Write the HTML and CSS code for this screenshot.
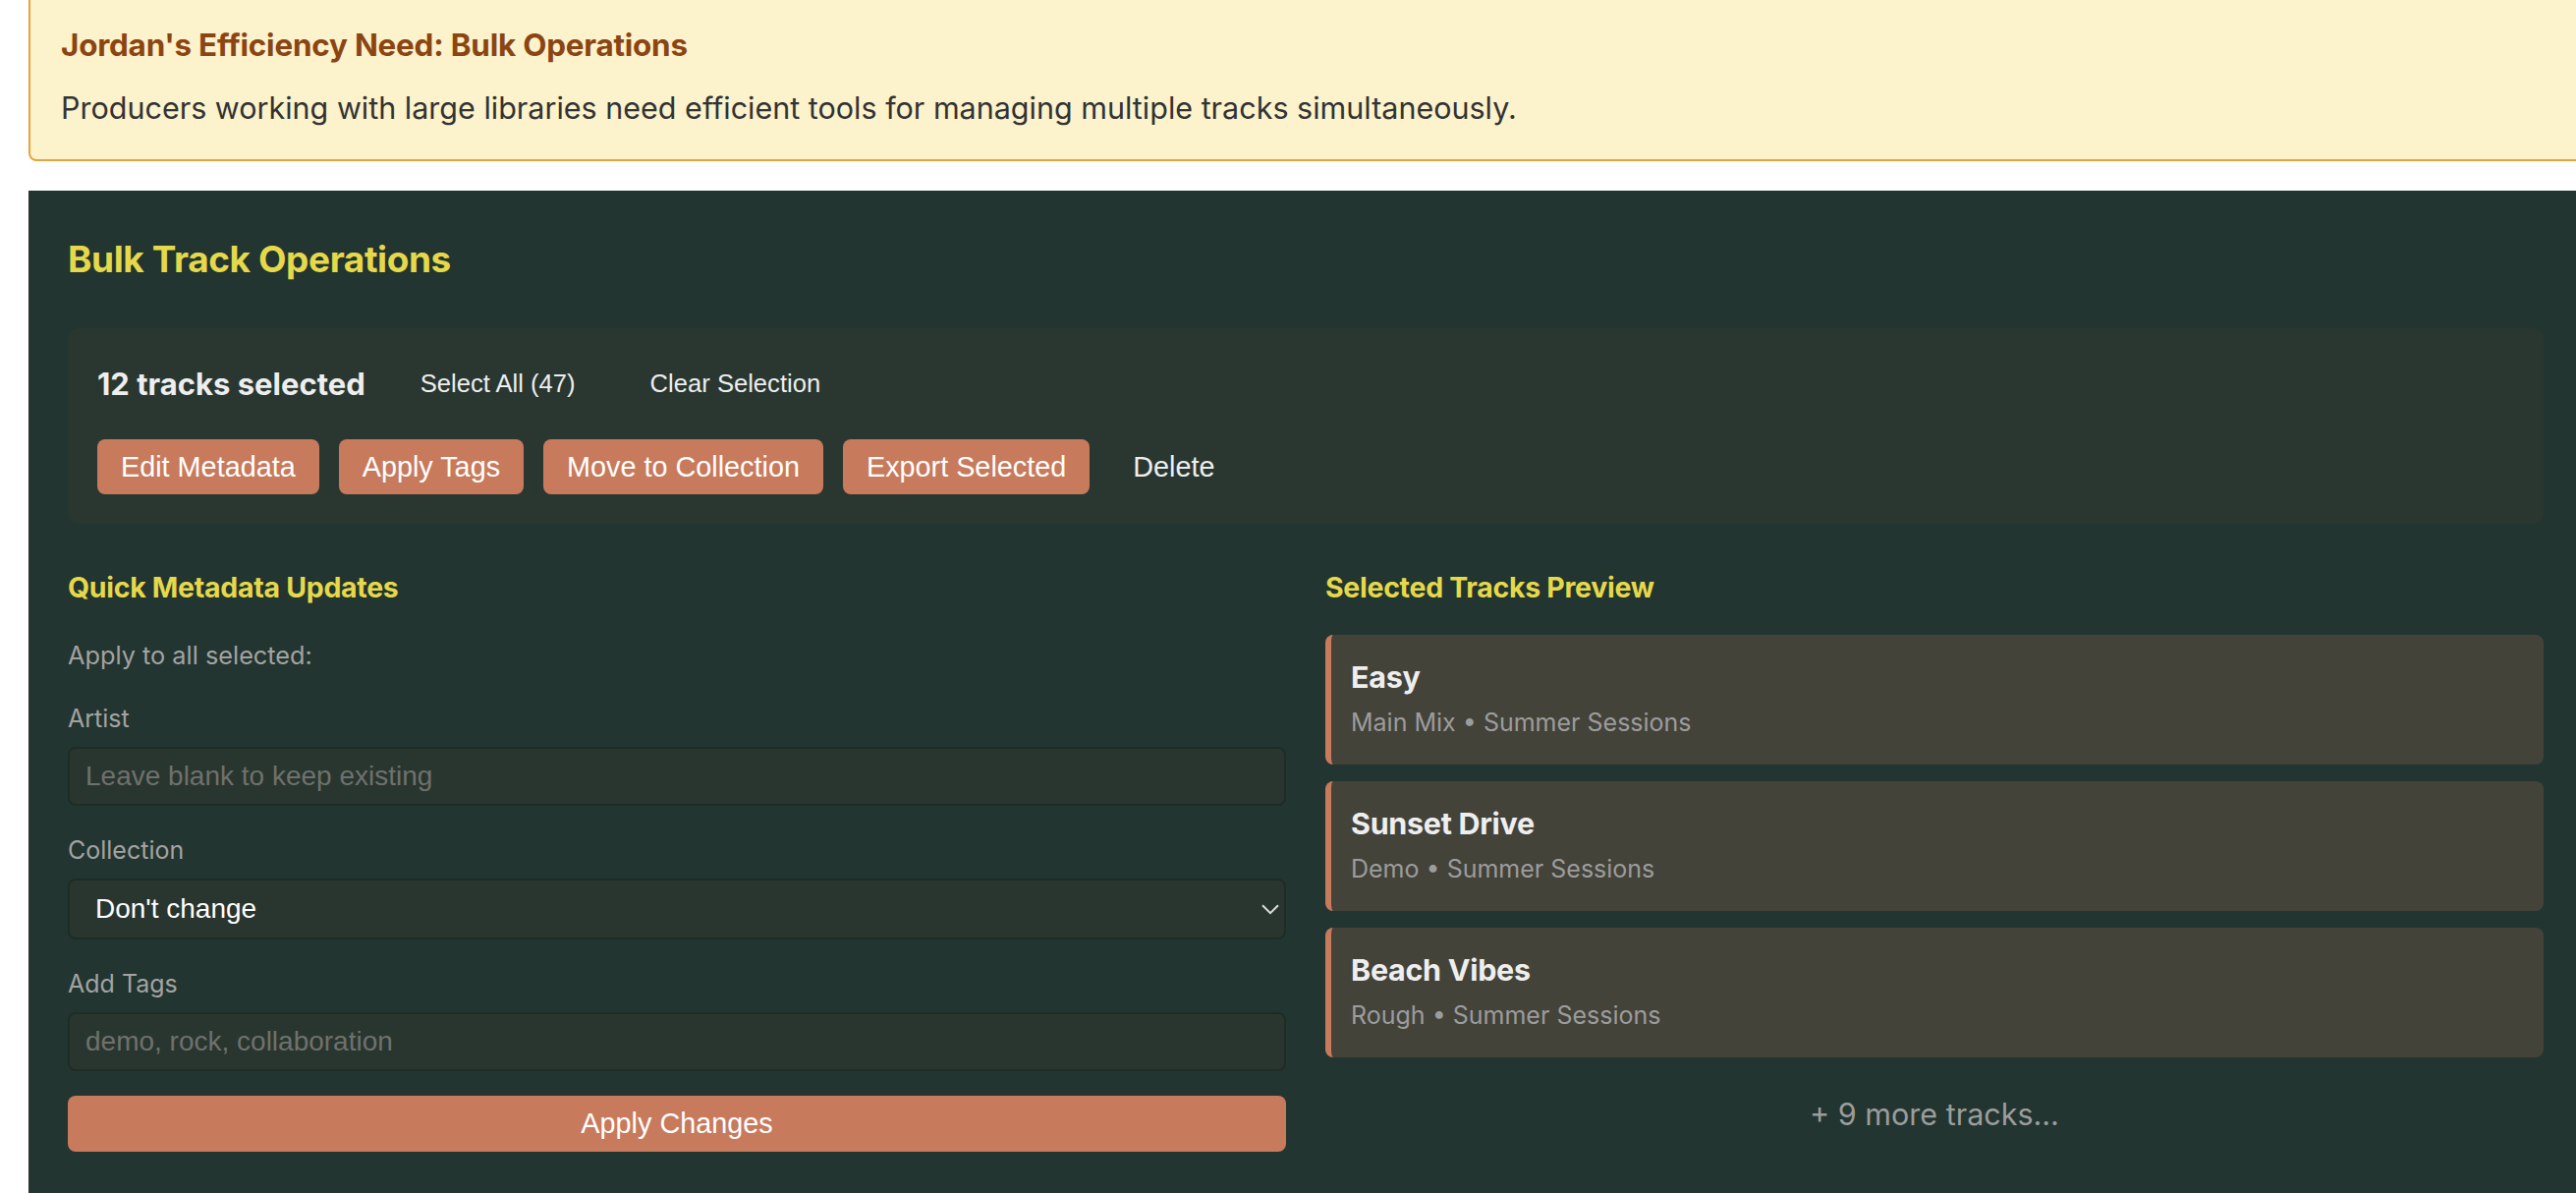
FILE: index.html
```html
<!DOCTYPE html>
<html lang="en">
<head>
<meta charset="utf-8">
<title>Bulk Track Operations</title>
<link rel="stylesheet" href="styles.css">
</head>
<body>
<div class="page">
  <div class="callout">
    <h4 class="callout-title">Jordan's Efficiency Need: Bulk Operations</h4>
    <p class="callout-text">Producers working with large libraries need efficient tools for managing multiple tracks simultaneously.</p>
  </div>

  <section class="bulk">
    <h3 class="bulk-title">Bulk Track Operations</h3>

    <div class="toolbar">
      <div class="sel-row">
        <span class="count">12 tracks selected</span>
        <button class="link-btn">Select All (47)</button>
        <button class="link-btn">Clear Selection</button>
      </div>
      <div class="actions">
        <button class="btn">Edit Metadata</button>
        <button class="btn">Apply Tags</button>
        <button class="btn">Move to Collection</button>
        <button class="btn">Export Selected</button>
        <button class="btn ghost">Delete</button>
      </div>
    </div>

    <div class="cols">
      <div class="col">
        <h4 class="col-title">Quick Metadata Updates</h4>
        <p class="hint">Apply to all selected:</p>
        <div class="field">
          <label class="label">Artist</label>
          <input class="input" type="text" placeholder="Leave blank to keep existing">
        </div>
        <div class="field">
          <label class="label">Collection</label>
          <div class="select-wrap">
            <select class="input select">
              <option>Don't change</option>
            </select>
            <svg class="chevron" width="18" height="11" viewBox="0 0 18 11"><path d="M1 1.2 L9 9.2 L17 1.2" fill="none" stroke="#dcdcdc" stroke-width="2"/></svg>
          </div>
        </div>
        <div class="field last">
          <label class="label">Add Tags</label>
          <input class="input" type="text" placeholder="demo, rock, collaboration">
        </div>
        <button class="btn wide">Apply Changes</button>
      </div>

      <div class="col">
        <h4 class="col-title">Selected Tracks Preview</h4>
        <div class="card">
          <div class="card-title">Easy</div>
          <div class="card-meta">Main Mix • Summer Sessions</div>
        </div>
        <div class="card">
          <div class="card-title">Sunset Drive</div>
          <div class="card-meta">Demo • Summer Sessions</div>
        </div>
        <div class="card">
          <div class="card-title">Beach Vibes</div>
          <div class="card-meta">Rough • Summer Sessions</div>
        </div>
        <div class="more">+ 9 more tracks...</div>
      </div>
    </div>
  </section>
</div>
</body>
</html>
```

FILE: styles.css
```css
html, body {
  margin: 0;
  padding: 0;
  overflow: hidden;
  background: #ffffff;
}

body {
  font-family: "Inter", "Liberation Sans", sans-serif;
}

.page {
  padding-left: 29px;
  width: 2600px;
}

/* Callout */
.callout {
  width: 2587px;
  background: #fcf2cb;
  border: 2px solid #e8a33b;
  border-top: none;
  border-radius: 0 0 8px 8px;
  padding: 27px 30px 35px 31px;
  box-sizing: content-box;
}

.callout-title {
  margin: 0;
  font-size: 31.4px;
  font-weight: 700;
  color: #8b4513;
  line-height: 38px;
  letter-spacing: -0.2px;
}

.callout-text {
  margin: 27px 0 0;
  font-size: 30.5px;
  line-height: 35px;
  color: #333333;
}

/* Bulk panel */
.bulk {
  margin-top: 30px;
  background: #223530;
  padding: 47px 40px 40px 40px;
  width: 2520px;
}

.bulk-title {
  margin: 0 0 47px;
  font-size: 37px;
  line-height: 46px;
  font-weight: 700;
  color: #e5d84b;
  letter-spacing: -0.4px;
}

.toolbar {
  background: #293730;
  border-radius: 10px;
  padding: 30px;
  display: flex;
  flex-direction: column;
  gap: 30px;
}

.sel-row {
  display: flex;
  align-items: center;
  gap: 36px;
}

.count {
  font-size: 31px;
  font-weight: 700;
  color: #eeeeee;
}

.link-btn {
  background: transparent;
  border: none;
  color: #eeeeee;
  font-family: "Liberation Sans", Arial, sans-serif;
  font-size: 25.6px;
  line-height: 29px;
  padding: 12px 20px;
  cursor: pointer;
}

.actions {
  display: flex;
  gap: 20px;
}

.btn {
  background: #c87a5c;
  color: #ffffff;
  border: none;
  border-radius: 8px;
  font-family: "Liberation Sans", Arial, sans-serif;
  font-size: 28.8px;
  line-height: 32px;
  padding: 12px 24px;
  cursor: pointer;
}

.btn.ghost {
  background: transparent;
  color: #eeeeee;
}

/* Columns */
.cols {
  margin-top: 47px;
  display: grid;
  grid-template-columns: 1fr 1fr;
  gap: 40px;
}

.col-title {
  margin: 0;
  font-size: 28.5px;
  line-height: 35px;
  font-weight: 700;
  color: #e5d84b;
  letter-spacing: -0.3px;
}

.hint {
  margin: 36px 0 34px;
  font-size: 25.3px;
  line-height: 31px;
  color: #a3a3a3;
}

.field {
  margin-bottom: 30px;
}

.field.last {
  margin-bottom: 25px;
}

.label {
  display: block;
  margin-bottom: 13px;
  font-size: 25px;
  line-height: 31px;
  color: #a3a3a3;
}

.input {
  display: block;
  width: 100%;
  box-sizing: border-box;
  background: #29362f;
  border: 2px solid #1e2c26;
  border-radius: 8px;
  padding: 12px 16px;
  font-family: "Liberation Sans", Arial, sans-serif;
  font-size: 28px;
  line-height: 32px;
  color: #ffffff;
  outline: none;
}

.input::placeholder {
  color: #6e716d;
}

.select-wrap {
  position: relative;
}

.select {
  appearance: none;
  -webkit-appearance: none;
  padding: 13px 40px 13px 26px;
  height: 62px;
}

.chevron {
  position: absolute;
  right: 7px;
  top: 26px;
  pointer-events: none;
}

.btn.wide {
  display: block;
  width: 100%;
  padding: 12px 24px 13px;
}

/* Cards */
.col-title + .card {
  margin-top: 31px;
}

.card {
  background: #43433a;
  border-left: 6px solid #c87a5c;
  border-radius: 8px;
  padding: 24px 24px 27px 20px;
  margin-bottom: 17px;
}

.card-title {
  font-size: 30.5px;
  line-height: 37px;
  font-weight: 700;
  color: #eeeeee;
  margin-bottom: 13px;
  letter-spacing: -0.3px;
}

.card-meta {
  font-size: 25px;
  line-height: 31px;
  color: #9c9c9c;
}

.more {
  padding: 23px 0;
  text-align: center;
  font-size: 30.5px;
  line-height: 36px;
  color: #9c9c9c;
}
```
